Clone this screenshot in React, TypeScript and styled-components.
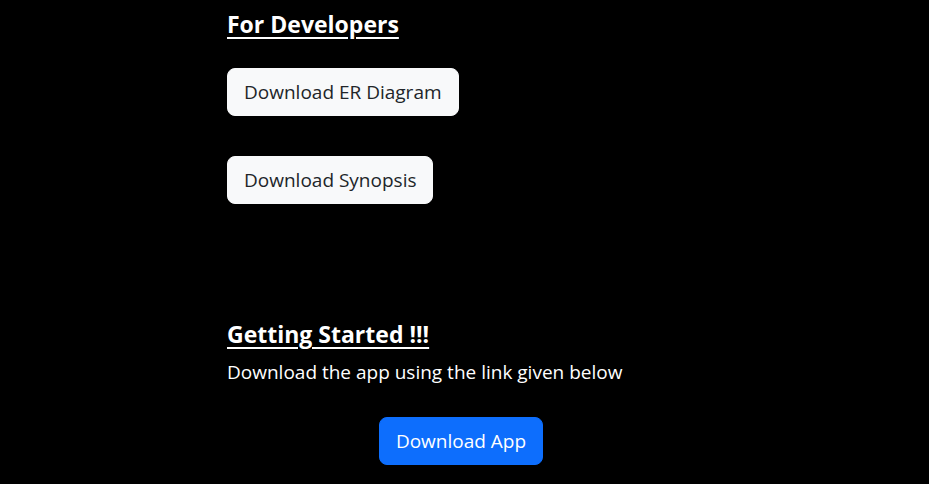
import React from "react";
import styled, { createGlobalStyle } from "styled-components";

const Global = createGlobalStyle`
  html, body { margin: 0; padding: 0; background: #000; }
  body { font-family: "Open Sans", "Noto Sans", sans-serif; color: #fff; }
  * { box-sizing: border-box; }
`;

const Page = styled.main`
  width: 929px;
  height: 484px;
  overflow: hidden;
  background: #000;
  display: flex;
  justify-content: flex-start;
  padding-left: 227px;
`;

const Column = styled.div`
  width: 468px;
  display: flex;
  flex-direction: column;
`;

const Heading = styled.h4<{ $top: number }>`
  margin: ${(p) => p.$top}px 0 0;
  font-size: 23px;
  line-height: 28px;
  font-weight: 700;
  text-decoration: underline;
  text-underline-offset: 4px;
  color: #fff;
`;

const Button = styled.button<{ $variant: "light" | "primary"; $top: number }>`
  align-self: ${(p) => (p.$variant === "primary" ? "center" : "flex-start")};
  margin-top: ${(p) => p.$top}px;
  height: 48px;
  padding: 0 16px;
  border-radius: 8px;
  border: 1px solid ${(p) => (p.$variant === "primary" ? "#0d6efd" : "#f8f9fa")};
  background: ${(p) => (p.$variant === "primary" ? "#0d6efd" : "#f8f9fa")};
  color: ${(p) => (p.$variant === "primary" ? "#fff" : "#212529")};
  font-family: inherit;
  font-size: 19px;
  line-height: 30px;
  cursor: pointer;
`;

const Lead = styled.p`
  margin: 9px 0 0;
  font-size: 19px;
  line-height: 30px;
  color: #fff;
`;

export default function App() {
  return (
    <>
      <Global />
      <Page>
        <Column>
          <Heading $top={10}>For Developers</Heading>
          <Button $variant="light" $top={30}>Download ER Diagram</Button>
          <Button $variant="light" $top={40}>Download Synopsis</Button>
          <Heading $top={116}>Getting Started !!!</Heading>
          <Lead>Download the app using the link given below</Lead>
          <Button $variant="primary" $top={30}>Download App</Button>
        </Column>
      </Page>
    </>
  );
}
